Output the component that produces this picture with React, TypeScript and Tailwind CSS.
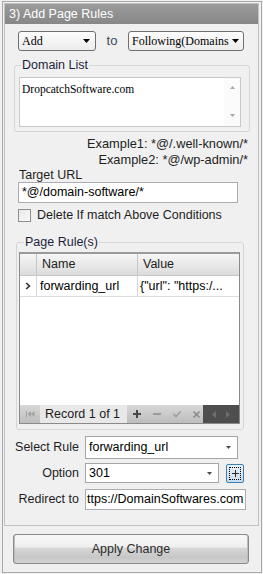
import React from "react";

function DownTri({ w = 7, h = 4, color = "#000" }: { w?: number; h?: number; color?: string }) {
  return (
    <svg width={w} height={h} viewBox={`0 0 ${w} ${h}`}>
      <path d={`M0 0H${w}L${w / 2} ${h}Z`} fill={color} />
    </svg>
  );
}

function UpTri({ color = "#a6a6a6" }: { color?: string }) {
  return (
    <svg width="5" height="3" viewBox="0 0 5 3">
      <path d="M0 3H5L2.5 0Z" fill={color} />
    </svg>
  );
}

// old-style drop-down with the serif caption and black arrow
function DropButton({ label, width }: { label: string; width: string }) {
  return (
    <div
      className={`${width} h-[20px] flex items-center justify-between pl-[3px] pr-[5px] border border-[#707070] rounded-[3px] bg-linear-to-b from-[#fdfdfd] to-[#ececec] overflow-hidden`}
    >
      <span className="font-['Liberation_Serif','Times_New_Roman',serif] text-[12px] text-black whitespace-nowrap">
        {label}
      </span>
      <span className="shrink-0 pl-[3px]">
        <DownTri />
      </span>
    </div>
  );
}

function Combo({ value, width, height }: { value: string; width: string; height: string }) {
  return (
    <div className={`${width} ${height} flex items-center justify-between pl-[3px] pr-[6px] border border-[#a5a5a5] bg-white`}>
      <span className="text-[12.5px] text-black">{value}</span>
      <DownTri w={5} h={3} color="#4a4a4a" />
    </div>
  );
}

function NavBar() {
  return (
    <div className="h-[18px] flex items-stretch bg-linear-to-b from-[#d8d8d8] to-[#bdbdbd]">
      <div className="w-[20px] flex items-center justify-center">
        <svg width="9" height="6" viewBox="0 0 9 6">
          <rect x="0" y="0" width="1" height="6" fill="#a3a3a3" />
          <path d="M1.5 3L5 0V6Z M5 3L8.5 0V6Z" fill="#a3a3a3" />
        </svg>
      </div>
      <div className="w-[87px] bg-[#e8e8e8] flex items-center pl-[5px] text-[12.5px] text-[#1c1c1c] whitespace-nowrap">
        Record 1 of 1
      </div>
      <div className="flex items-center gap-[12px] pl-[6px] w-[76px]">
        <svg width="8" height="8" viewBox="0 0 8 8">
          <path d="M4 0V8M0 4H8" stroke="#474747" strokeWidth="2" />
        </svg>
        <svg width="8" height="8" viewBox="0 0 8 8">
          <path d="M0 4H8" stroke="#9c9c9c" strokeWidth="2" />
        </svg>
        <svg width="8" height="8" viewBox="0 0 8 8">
          <path d="M0.5 4L3 6.5L7.5 1.5" stroke="#a0a0a0" strokeWidth="1.8" fill="none" />
        </svg>
        <svg width="7" height="7" viewBox="0 0 7 7">
          <path d="M0.5 0.5L6.5 6.5M6.5 0.5L0.5 6.5" stroke="#8e8e8e" strokeWidth="1.6" />
        </svg>
      </div>
      <div className="flex-1 bg-[#4e4e4e] flex items-center justify-around px-[4px]">
        <svg width="4" height="7" viewBox="0 0 4 7">
          <path d="M4 0V7L0 3.5Z" fill="#6e6e6e" />
        </svg>
        <svg width="4" height="7" viewBox="0 0 4 7">
          <path d="M0 0V7L4 3.5Z" fill="#6e6e6e" />
        </svg>
      </div>
    </div>
  );
}

function RulesGrid() {
  return (
    <div className="w-[221px] h-[172px] border border-[#8a8a8a] border-t-2 border-t-[#9a9a9a] bg-white flex flex-col">
      <div className="h-[22px] flex bg-linear-to-b from-[#f6f6f6] to-[#dcdcdc] border-b border-[#c6c6c6] text-[12.5px] text-[#222]">
        <div className="w-[17px] border-r border-[#c6c6c6]" />
        <div className="w-[101px] border-r border-[#c6c6c6] flex items-center pl-[5px]">Name</div>
        <div className="flex-1 flex items-center pl-[5px]">Value</div>
      </div>
      <div className="h-[21px] flex border-b border-[#dcdcdc] text-[12.5px] text-black">
        <div className="w-[17px] border-r border-[#d6d6d6] flex items-center justify-center">
          <svg width="6" height="8" viewBox="0 0 6 8">
            <path d="M1.2 1L4.4 4L1.2 7" stroke="#333" strokeWidth="1.7" fill="none" />
          </svg>
        </div>
        <div className="w-[101px] border-r border-[#d6d6d6] flex items-center pl-[3px] whitespace-nowrap">
          forwarding_url
        </div>
        <div className="flex-1 min-w-0 flex items-center pl-[2px] whitespace-nowrap overflow-hidden">
          {'{"url": "https:/...'}
        </div>
      </div>
      <div className="flex-1" />
      <NavBar />
    </div>
  );
}

export default function App() {
  return (
    <div className="w-[263px] h-[574px] bg-[#f0f0f0] pt-[1px] pl-[2px] font-['Liberation_Sans',Arial,sans-serif] text-[12px] text-[#1e1e1e]">
      <div className="w-[260px] h-[572px] border border-[#a8a8a8] pt-[1px] pl-[1px]">
        <div className="w-[255px] h-[523px] border border-[#c2c2c2] flex flex-col">
          <div className="h-[20px] shrink-0 bg-linear-to-b from-[#9b9b9b] to-[#878787] flex items-center pl-[4px] text-white text-[12.5px]">
            3) Add Page Rules
          </div>

          {/* action + target selectors */}
          <div className="mt-[7px] ml-[13px] flex items-center">
            <DropButton label="Add" width="w-[78px]" />
            <span className="w-[32px] text-center text-[13px] text-[#3b4a5c]">to</span>
            <DropButton label="Following(Domains" width="w-[116px]" />
          </div>

          <fieldset className="mt-[7px] ml-[9px] w-[236px] border border-[#d6d6d6] rounded-[3px] pt-[5px] px-[4px] pb-[4px]">
            <legend className="ml-[2px] px-[1px] leading-[14px] text-[12.5px] text-[#1d1f3c]">Domain List</legend>
            <div className="w-[222px] h-[50px] border border-[#c9c9c9] bg-white flex">
              <div className="flex-1 pl-[2px] pt-[3px] font-['Liberation_Serif','Times_New_Roman',serif] text-[11.5px] text-black">
                DropcatchSoftware.com
              </div>
              <div className="w-[16px] bg-[#fbfbfb] flex flex-col items-center justify-between pt-[8px] pb-[9px]">
                <UpTri />
                <DownTri w={5} h={3} color="#a6a6a6" />
              </div>
            </div>
          </fieldset>

          <div className="mt-[4px] pr-[10px] text-right leading-[16px] text-[12.8px] text-[#1e1e1e]">
            <div>Example1: *@/.well-known/*</div>
            <div>Example2: *@/wp-admin/*</div>
          </div>

          <div className="pl-[14px] leading-[14px] text-[12.5px]">Target URL</div>
          <div className="ml-[13px] w-[220px] h-[21px] border border-[#abadb3] bg-white flex items-center pl-[3px] text-[12.5px] text-black">
            *@/domain-software/*
          </div>

          <div className="mt-[6px] ml-[13px] flex items-center gap-[6px] h-[13px]">
            <div className="w-[13px] h-[13px] border border-[#8e8f8f] bg-linear-to-br from-[#e6e6e6] to-[#fbfbfb]" />
            <span className="text-[12.5px]">Delete If match Above Conditions</span>
          </div>

          <fieldset className="mt-[13px] ml-[11px] w-[228px] border border-[#d6d6d6] rounded-[3px] pt-[3px] px-[2px] pb-[5px]">
            <legend className="ml-[5px] px-[1px] leading-[14px] text-[12.5px] text-[#1d1f3c]">Page Rule(s)</legend>
            <RulesGrid />
          </fieldset>

          {/* rule editor */}
          <div className="mt-[6px] flex items-center text-[12.5px]">
            <span className="ml-[6px] w-[68px] text-right">Select Rule</span>
            <div className="ml-[6px]">
              <Combo value="forwarding_url" width="w-[153px]" height="h-[23px]" />
            </div>
          </div>
          <div className="mt-[4px] flex items-center text-[12.5px]">
            <span className="ml-[6px] w-[68px] text-right">Option</span>
            <div className="ml-[6px]">
              <Combo value="301" width="w-[134px]" height="h-[20px]" />
            </div>
            <div className="ml-[7px] w-[18px] h-[19px] border border-[#3c7fb1] rounded-[2px] bg-linear-to-b from-[#e8f1f8] to-[#c9dcec] p-[2px]">
              <div className="w-full h-full border border-dotted border-black flex items-center justify-center">
                <svg width="7" height="7" viewBox="0 0 7 7">
                  <path d="M3.5 0V7M0 3.5H7" stroke="#2a2a2a" strokeWidth="1" />
                </svg>
              </div>
            </div>
          </div>
          <div className="mt-[6px] flex items-center text-[12.5px]">
            <span className="ml-[6px] w-[68px] text-right">Redirect to</span>
            <div className="ml-[6px] w-[161px] h-[21px] border border-[#abadb3] bg-white flex items-center overflow-hidden pl-[1px]">
              <span className="whitespace-nowrap text-black text-[12.5px]">ttps://DomainSoftwares.com</span>
            </div>
          </div>
        </div>

        <button className="mt-[8px] ml-[9px] w-[236px] h-[30px] border border-[#8a8a8a] rounded-[3px] bg-[linear-gradient(to_bottom,#f8f8f8_0%,#efefef_42%,#d6d6d6_48%,#c7c7c7_80%,#d4d4d4_100%)] shadow-[inset_1px_0_0_#bdbdbd,inset_-1px_0_0_#bdbdbd] text-[12.5px] text-[#2b2b2b]">
          Apply Change
        </button>
      </div>
    </div>
  );
}
